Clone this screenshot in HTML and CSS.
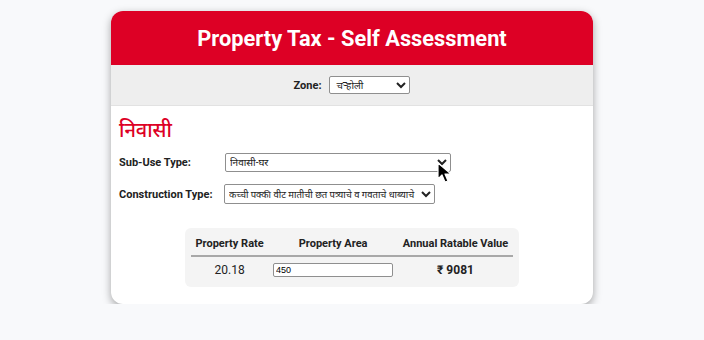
FILE: index.html
```html
<!DOCTYPE html>
<html lang="en">
<head>
    <meta charset="UTF-8">
    <meta name="viewport" content="width=device-width, initial-scale=1.0">
    <title>Property Tax - Self Assessment</title>
    <link rel="stylesheet" href="styles.css">
</head>
<body>

<div class="card">
    <div class="card-header">
        <h1>Property Tax - Self Assessment</h1>
    </div>

    <div class="zone-bar">
        <label for="zone">Zone:</label>
        <select id="zone" class="zone-select">
            <option>चऱ्होली</option>
        </select>
    </div>

    <div class="card-body">
        <h2 class="use-title">निवासी</h2>

        <div class="field-grid">
            <label for="subUse">Sub-Use Type:</label>
            <div class="select-wrap">
                <select id="subUse" class="sub-use">
                    <option>निवासी-घर</option>
                </select>
                <svg class="cursor" width="16" height="22" viewBox="0 0 16 22">
                    <path d="M1 1 L1 17 L5 13 L8 20 L11 19 L8 12 L14 12 Z" fill="#000" stroke="#fff" stroke-width="1.2" stroke-linejoin="round"/>
                </svg>
            </div>

            <label for="construction">Construction Type:</label>
            <div>
                <select id="construction" class="construction">
                    <option>कच्ची पक्की वीट मातीची छत पत्र्याचे व गवताचे धाब्याचे</option>
                </select>
            </div>
        </div>

        <div class="calc-box">
            <table class="calc-table">
                <thead>
                    <tr>
                        <th>Property Rate</th>
                        <th>Property Area</th>
                        <th>Annual Ratable Value</th>
                    </tr>
                </thead>
                <tbody>
                    <tr>
                        <td>20.18</td>
                        <td><input type="text" class="area-input" value="450"></td>
                        <td class="total">₹ 9081</td>
                    </tr>
                </tbody>
            </table>
        </div>
    </div>
</div>

</body>
</html>
```

FILE: styles.css
```css
/* Page */
body {
    margin: 0;
    padding-top: 11px;
    background: #f8f9fb;
    font-family: Roboto, "Noto Sans", Arial, sans-serif;
    color: #222;
}

/* Card */
.card {
    width: 482px;
    margin: 0 auto;
    background: #fff;
    border-radius: 12px;
    box-shadow: 0 3px 8px rgba(0, 0, 0, 0.35);
    overflow: hidden;
}

.card-header {
    background: #dd0025;
    height: 54px;
    display: flex;
    align-items: center;
    justify-content: center;
}

.card-header h1 {
    margin: 0;
    color: #fff;
    font-size: 21.8px;
    font-weight: bold;
}

/* Zone selector */
.zone-bar {
    background: #eeeeee;
    height: 40px;
    border-bottom: 1px solid #e2e2e2;
    display: flex;
    align-items: center;
    justify-content: center;
    gap: 8px;
    font-size: 11px;
    font-weight: bold;
}

.zone-select {
    width: 81px;
    height: 18px;
    font-size: 10px;
    padding: 0 2px;
    border: 1px solid #8f8f8f;
    border-radius: 2px;
    background: #fff;
}

/* Body */
.card-body {
    padding: 10px 8px 17px;
}

.use-title {
    margin: 0 0 10px;
    color: #dd0025;
    font-size: 20px;
    font-weight: 500;
}

.field-grid {
    display: grid;
    grid-template-columns: 106px auto;
    row-gap: 12px;
    align-items: center;
    font-size: 11px;
    font-weight: bold;
}

.select-wrap {
    position: relative;
}

select {
    font-family: inherit;
    color: #222;
}

.sub-use {
    width: 226px;
    height: 19px;
    font-size: 10px;
    border: 1px solid #8f8f8f;
    border-radius: 2px;
    background: #fff;
}

.construction {
    width: 211px;
    height: 20px;
    font-size: 9.5px;
    border: 1px solid #8f8f8f;
    border-radius: 2px;
    background: #fff;
    margin-left: -1px;
}

.cursor {
    position: absolute;
    left: 212px;
    top: 9px;
}

/* Calculation box */
.calc-box {
    width: 322px;
    margin: 24px auto 0;
    padding: 5px 6px 6px;
    background: #f4f4f4;
    border-radius: 6px;
}

.calc-table {
    width: 100%;
    border-collapse: collapse;
    font-size: 11px;
}

.calc-table th {
    font-weight: bold;
    white-space: nowrap;
    padding: 4px 4px 5px;
    border-bottom: 2px solid #a8a8a8;
}

.calc-table td {
    text-align: center;
    padding: 5px 4px 4px;
    font-size: 12px;
}

.area-input {
    width: 114px;
    height: 10px;
    font-size: 9px;
    padding: 1px 2px;
    border: 1px solid #8f8f8f;
    border-radius: 2px;
}

.calc-table .total {
    font-weight: bold;
}
```
